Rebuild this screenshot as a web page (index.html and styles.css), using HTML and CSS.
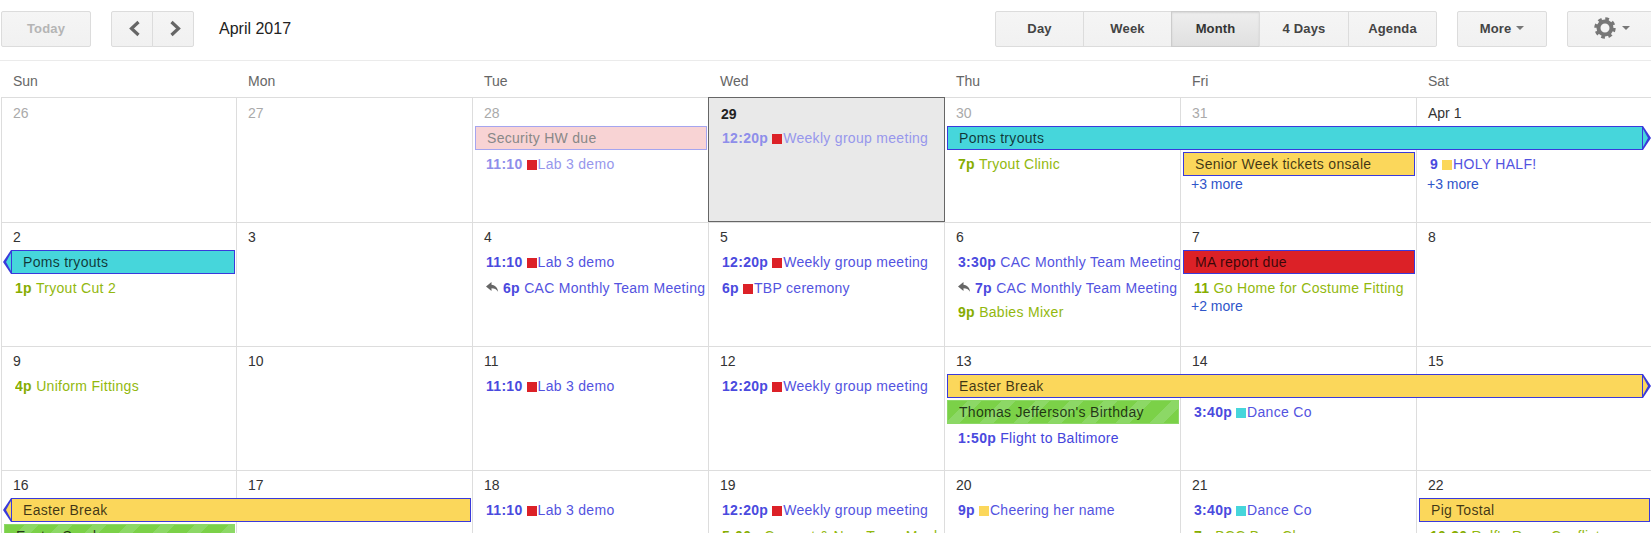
FILE: index.html
```html
<!DOCTYPE html>
<html lang="en">
<head>
<meta charset="utf-8">
<title>April 2017</title>
<link rel="stylesheet" href="styles.css">
</head>
<body>
<header class="toolbar">
  <button class="btn today-btn">Today</button>
  <div class="group nav">
    <button class="btn icon-btn"><svg width="13" height="17" viewBox="0 0 13 17"><path d="M10.500 2 3.500 8.500l7 6.500" fill="none" stroke="#666" stroke-width="3.2"/></svg></button>
    <button class="btn icon-btn"><svg width="13" height="17" viewBox="0 0 13 17"><path d="M2.500 2l7 6.500-7 6.500" fill="none" stroke="#666" stroke-width="3.2"/></svg></button>
  </div>
  <div class="period">April 2017</div>
  <div class="group views">
    <button class="btn v1">Day</button>
    <button class="btn v2">Week</button>
    <button class="btn v3 selected">Month</button>
    <button class="btn v4">4 Days</button>
    <button class="btn v5">Agenda</button>
  </div>
  <button class="btn more-btn">More<i class="caret"></i></button>
  <button class="btn gear-btn">
    <svg width="22" height="22" viewBox="0 0 22 22"><circle cx="11" cy="11" r="6.500" fill="none" stroke="#777" stroke-width="4"/><circle cx="11" cy="11" r="9" fill="none" stroke="#777" stroke-width="3.4" stroke-dasharray="3.6 3.47"/></svg><i class="caret"></i>
  </button>
</header>

<div class="weekdays">
  <div>Sun</div><div>Mon</div><div>Tue</div><div>Wed</div><div>Thu</div><div>Fri</div><div>Sat</div>
</div>

<main class="month">
  <section class="week">
    <div class="day c1 other">26</div>
    <div class="day c2 other">27</div>
    <div class="day c3 other">28</div>
    <div class="day c4 current">29</div>
    <div class="day c5 other">30</div>
    <div class="day c6 other">31</div>
    <div class="day c7">Apr 1</div>

    <div class="chip red past c3 r1">Security HW due</div>
    <div class="ev past c3 r2"><b>11:10</b><i class="sq red"></i>Lab 3 demo</div>
    <div class="ev past c4 r1"><b>12:20p</b><i class="sq red"></i>Weekly group meeting</div>
    <div class="chip cyan cont-r c5 s3 r1">Poms tryouts</div>
    <div class="ev green c5 r2"><b>7p</b> Tryout Clinic</div>
    <div class="chip yellow c6 r2">Senior Week tickets onsale</div>
    <div class="more c6 r3">+3 more</div>
    <div class="ev c7 r2"><b>9</b><i class="sq yellow"></i>HOLY HALF!</div>
    <div class="more c7 r3">+3 more</div>
  </section>

  <section class="week">
    <div class="day c1">2</div>
    <div class="day c2">3</div>
    <div class="day c3">4</div>
    <div class="day c4">5</div>
    <div class="day c5">6</div>
    <div class="day c6">7</div>
    <div class="day c7">8</div>

    <div class="chip cyan cont-l c1 r1">Poms tryouts</div>
    <div class="ev green c1 r2"><b>1p</b> Tryout Cut 2</div>
    <div class="ev c3 r1"><b>11:10</b><i class="sq red"></i>Lab 3 demo</div>
    <div class="ev c3 r2"><svg class="reply" width="13" height="11" viewBox="0 0 13 11"><path d="M5.500 0 0 4.500 5.500 9V6.200c3 0 5 .9 6.600 3.600C11.700 6 9.500 3.200 5.500 2.800z" fill="#666"/></svg><b>6p</b> CAC Monthly Team Meeting</div>
    <div class="ev c4 r1"><b>12:20p</b><i class="sq red"></i>Weekly group meeting</div>
    <div class="ev c4 r2"><b>6p</b><i class="sq red"></i>TBP ceremony</div>
    <div class="ev c5 r1"><b>3:30p</b> CAC Monthly Team Meeting</div>
    <div class="ev c5 r2"><svg class="reply" width="13" height="11" viewBox="0 0 13 11"><path d="M5.500 0 0 4.500 5.500 9V6.200c3 0 5 .9 6.600 3.600C11.700 6 9.500 3.200 5.500 2.800z" fill="#666"/></svg><b>7p</b> CAC Monthly Team Meeting</div>
    <div class="ev green c5 r3"><b>9p</b> Babies Mixer</div>
    <div class="chip red c6 r1">MA report due</div>
    <div class="ev green c6 r2"><b>11</b> Go Home for Costume Fitting</div>
    <div class="more tight c6 r3">+2 more</div>
  </section>

  <section class="week">
    <div class="day c1">9</div>
    <div class="day c2">10</div>
    <div class="day c3">11</div>
    <div class="day c4">12</div>
    <div class="day c5">13</div>
    <div class="day c6">14</div>
    <div class="day c7">15</div>

    <div class="ev green c1 r1"><b>4p</b> Uniform Fittings</div>
    <div class="ev c3 r1"><b>11:10</b><i class="sq red"></i>Lab 3 demo</div>
    <div class="ev c4 r1"><b>12:20p</b><i class="sq red"></i>Weekly group meeting</div>
    <div class="chip yellow cont-r c5 s3 r1">Easter Break</div>
    <div class="chip holiday c5 r2">Thomas Jefferson's Birthday</div>
    <div class="ev low c5 r3"><b>1:50p</b> Flight to Baltimore</div>
    <div class="ev c6 r2"><b>3:40p</b><i class="sq cyan"></i>Dance Co</div>
  </section>

  <section class="week">
    <div class="day c1">16</div>
    <div class="day c2">17</div>
    <div class="day c3">18</div>
    <div class="day c4">19</div>
    <div class="day c5">20</div>
    <div class="day c6">21</div>
    <div class="day c7">22</div>

    <div class="chip yellow cont-l c1 s2 r1">Easter Break</div>
    <div class="chip holiday c1 r2">Easter Sunday</div>
    <div class="ev c3 r1"><b>11:10</b><i class="sq red"></i>Lab 3 demo</div>
    <div class="ev c4 r1"><b>12:20p</b><i class="sq red"></i>Weekly group meeting</div>
    <div class="ev green c4 r2"><b>5:00p</b> Concert &amp; New Team Meal</div>
    <div class="ev c5 r1"><b>9p</b><i class="sq yellow"></i>Cheering her name</div>
    <div class="ev c6 r1"><b>3:40p</b><i class="sq cyan"></i>Dance Co</div>
    <div class="ev green c6 r2"><b>7p</b> BCC Bow Ch</div>
    <div class="chip yellow c7 r1">Pig Tostal</div>
    <div class="ev green c7 r2"><b>10:30</b> Ralf's Rage Conflict</div>
  </section>
</main>
</body>
</html>
```

FILE: styles.css
```css
* { box-sizing: border-box; }

html, body {
  margin: 0;
  height: 533px;
  overflow: hidden;
  background: #fff;
}

body {
  font-family: "Liberation Sans", Arial, sans-serif;
  font-size: 14px;
  color: #333;
}

/* Toolbar */
.toolbar {
  display: flex;
  align-items: flex-start;
  height: 61px;
  padding: 11px 0 0 1px;
  border-bottom: 1px solid #ebebeb;
  white-space: nowrap;
  overflow: hidden;
}

.toolbar > * { flex: none; }

.btn {
  display: flex;
  align-items: center;
  justify-content: center;
  height: 36px;
  padding: 0 0 2px;
  font: bold 13px "Liberation Sans", Arial, sans-serif;
  letter-spacing: .15px;
  color: #444;
  background: linear-gradient(#f5f5f5, #f1f1f1);
  border: 1px solid #dcdcdc;
  border-radius: 2px;
}

.today-btn { width: 90px; color: #b5b5b5; }

.group { display: flex; }
.group .btn { border-radius: 0; margin-left: -1px; }
.group .btn:first-child { margin-left: 0; border-radius: 2px 0 0 2px; }
.group .btn:last-child { border-radius: 0 2px 2px 0; }

.nav { margin-left: 20px; }
.icon-btn { width: 42px; padding-left: 4px; }

.period {
  margin-left: 25px;
  width: 776px;
  font-size: 16px;
  line-height: 36px;
  color: #222;
}

.v1 { width: 89px; }
.v2 { width: 89px; }
.v3 { width: 89px; }
.v4 { width: 90px; }
.v5 { width: 89px; }

.selected {
  background: linear-gradient(#eeeeee, #e0e0e0);
  border-color: #ccc;
  box-shadow: inset 0 1px 2px rgba(0, 0, 0, .1);
  color: #333;
}

.more-btn { width: 90px; margin-left: 20px; gap: 5px; }
.gear-btn {
  width: 100px;
  margin-left: 20px;
  gap: 6px;
  justify-content: flex-start;
  padding-left: 26px;
  border-radius: 2px 0 0 2px;
}

.caret {
  width: 0;
  height: 0;
  border-style: solid;
  border-width: 4px 4px 0;
  border-color: #777 transparent transparent;
}

/* Weekday header */
.weekdays {
  display: grid;
  grid-template-columns: 235px repeat(5, 236px) 235px;
  height: 36px;
  margin-left: 1px;
  color: #666;
  line-height: 40px;
}

.weekdays > div { padding-left: 12px; }

/* Month grid */
.month {
  height: 436px;
  margin-left: 1px;
  overflow: hidden;
}

.week {
  display: grid;
  grid-template-columns: 235px repeat(5, 236px) 235px;
  grid-template-rows: 27px 26px 24px 26px 20px;
  height: 124px;
  border-top: 1px solid #ddd;
}

.week:first-child {
  grid-template-rows: 28px 26px 24px 26px 20px;
  height: 125px;
}

.day {
  grid-row: 1 / -1;
  padding: 6px 0 0 11px;
  line-height: 17px;
  border-left: 1px solid #ddd;
  color: #333;
}

.week:first-child .day { padding-top: 7px; }

.week:first-child .day.current {
  z-index: 1;
  margin: -1px -1px 0 0;
  padding-top: 8px;
  padding-left: 12px;
  font-weight: bold;
  color: #222;
  background: #e9e9e9;
  border: 1px solid #666;
}

.day.other { color: #aaa; }

.c1 { grid-column-start: 1; }
.c2 { grid-column-start: 2; }
.c3 { grid-column-start: 3; }
.c4 { grid-column-start: 4; }
.c5 { grid-column-start: 5; }
.c6 { grid-column-start: 6; }
.c7 { grid-column-start: 7; }
.s2 { grid-column-end: span 2; }
.s3 { grid-column-end: span 3; }
.r1 { grid-row-start: 2; }
.r2 { grid-row-start: 3; }
.r3 { grid-row-start: 4; }

/* Timed events */
.ev {
  z-index: 2;
  min-width: 0;
  margin-left: 14px;
  line-height: 24px;
  letter-spacing: .3px;
  white-space: nowrap;
  overflow: hidden;
  color: #5353e0;
}

.ev b { color: #4a4ade; }
.ev.green { color: #92b80e; }
.ev.green b { color: #86ad00; }
.ev.past { color: #9797ec; }
.ev.past b { color: #8e8eea; }
.ev.low { margin-top: 2px; color: #4444dc; }

.sq {
  display: inline-block;
  width: 10px;
  height: 10px;
  margin: 0 1px 0 4px;
  vertical-align: -1px;
}

.sq.red { background: #dc2127; }
.sq.yellow { background: #fbd75b; }
.sq.cyan { background: #46d6db; }

.reply { margin-right: 4px; }

/* All-day chips */
.chip {
  position: relative;
  z-index: 2;
  height: 24px;
  margin: 0 1px 0 3px;
  padding-left: 11px;
  line-height: 22px;
  letter-spacing: .3px;
  white-space: nowrap;
  border: 1px solid #3a3adb;
  color: rgba(0, 0, 0, .75);
  background: var(--chip);
}

.chip.red { --chip: #dc2127; }
.chip.yellow { --chip: #fbd75b; }
.chip.cyan { --chip: #46d6db; }

.chip.past {
  background: #f8d3d4;
  border-color: #a5a5ef;
  color: #888;
}

.chip.holiday {
  border-color: #8cd866;
  background: repeating-linear-gradient(135deg, #7bd148 0 14px, #8cd866 14px 24px);
  overflow: hidden;
}

.cont-l { margin-left: 10px; }
.cont-r { margin-right: 8px; }

.cont-l::before, .cont-l::after,
.cont-r::before, .cont-r::after {
  content: "";
  position: absolute;
  width: 0;
  height: 0;
  border-style: solid;
  border-color: transparent;
}

.cont-l::before, .cont-r::before { top: -1px; }
.cont-l::after, .cont-r::after { top: 2px; }

.cont-l::before { left: -9px; border-width: 12px 8px 12px 0; border-right-color: #3a3adb; }
.cont-l::after { left: -6px; border-width: 9px 5px 9px 0; border-right-color: var(--chip); }

.cont-r::before { right: -9px; border-width: 12px 0 12px 8px; border-left-color: #3a3adb; }
.cont-r::after { right: -6px; border-width: 9px 0 9px 5px; border-left-color: var(--chip); }

/* More links */
.more {
  z-index: 2;
  align-self: start;
  margin-left: 11px;
  line-height: 16px;
  color: #2f55c9;
}

.more.tight { margin-top: -2px; }
```
